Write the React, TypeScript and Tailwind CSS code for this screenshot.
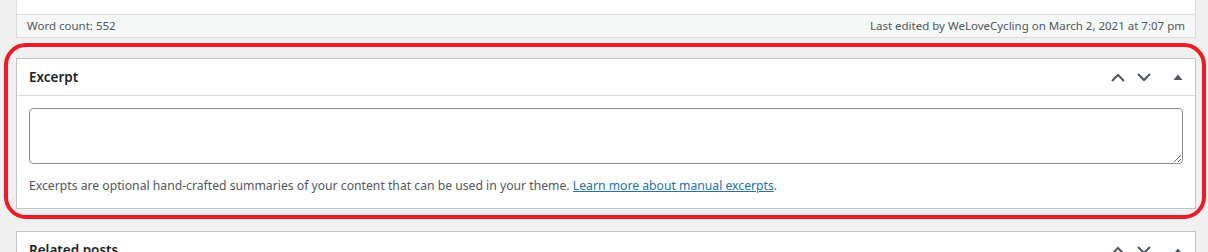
const font = { fontFamily: '"Noto Sans", "Open Sans", Arial, sans-serif' };

function Chevron({ dir }: { dir: "up" | "down" }) {
  return (
    <svg width="14" height="9" viewBox="0 0 14 9" fill="none" className="text-[#50575e]">
      {dir === "up" ? (
        <path d="M1 8L7 2L13 8" stroke="currentColor" strokeWidth="2" />
      ) : (
        <path d="M1 1L7 7L13 1" stroke="currentColor" strokeWidth="2" />
      )}
    </svg>
  );
}

function BoxControls() {
  return (
    <div className="flex items-center">
      <span className="flex w-[26px] justify-center">
        <Chevron dir="up" />
      </span>
      <span className="flex w-[26px] justify-center">
        <Chevron dir="down" />
      </span>
      <span className="flex w-[36px] justify-center pl-[6px]">
        <svg width="10" height="6" viewBox="0 0 10 6" className="text-[#50575e]">
          <path d="M0.5 6L5 0.5L9.5 6Z" fill="currentColor" />
        </svg>
      </span>
    </div>
  );
}

export default function App() {
  return (
    <div
      className="relative h-[252px] w-[1208px] overflow-hidden bg-[#f0f0f1] pl-4 pr-3 text-[#3c434a]"
      style={font}
    >
      {/* editor footer */}
      <div className="border-x border-b border-[#dcdcde] bg-white">
        <div className="h-[14px]" />
        <div className="flex h-[23px] items-center justify-between border-t border-[#dcdcde] bg-[#f6f7f7] px-[10px] text-[11.5px] text-[#50575e]">
          <span>Word count: 552</span>
          <span>Last edited by WeLoveCycling on March 2, 2021 at 7:07 pm</span>
        </div>
      </div>

      {/* Excerpt */}
      <div className="mt-[20px] border border-[#c3c4c7] bg-white">
        <div className="flex h-[37px] items-center justify-between border-b border-[#dcdcde] pl-3 pr-[2px]">
          <h2 className="text-[13.5px] font-semibold text-[#1d2327]">Excerpt</h2>
          <BoxControls />
        </div>
        <div className="px-3 pb-[13px] pt-3">
          <textarea
            className="block h-[56px] w-full resize-y rounded-[4px] border border-[#8c8f94] bg-white px-2 py-1 text-[14px] outline-none"
          />
          <p className="mt-[13px] text-[12.2px] leading-[18px] text-[#50575e]">
            Excerpts are optional hand-crafted summaries of your content that can be used in your theme.{" "}
            <a href="#" className="text-[#2271b1] underline">
              Learn more about manual excerpts
            </a>
            .
          </p>
        </div>
      </div>

      {/* Related posts */}
      <div className="mt-[22px] border border-[#c3c4c7] bg-white">
        <div className="flex h-[37px] items-center justify-between pl-3 pr-[2px]">
          <h2 className="text-[13.5px] font-semibold text-[#1d2327]">Related posts</h2>
          <BoxControls />
        </div>
      </div>

      {/* red annotation */}
      <div className="pointer-events-none absolute left-[4px] top-[43px] h-[176px] w-[1202px] rounded-[22px] border-4 border-[#ed1c24]" />
    </div>
  );
}
